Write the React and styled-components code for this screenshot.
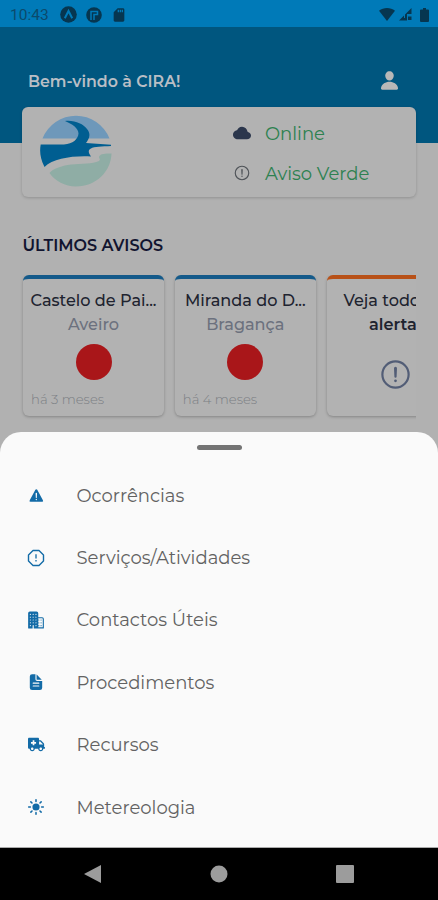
import React from 'react'
import styled, { createGlobalStyle } from 'styled-components'
import {
  IoPerson,
  IoCloud,
  IoAlertCircleOutline,
  IoWarning,
  IoBusiness,
  IoDocumentText,
  IoSunny,
} from 'react-icons/io5'
import { FaAmbulance } from 'react-icons/fa'
import { MdSdCard } from 'react-icons/md'

const GlobalStyle = createGlobalStyle`
  * {
    box-sizing: border-box;
  }

  body {
    margin: 0;
    background-color: #b1b1b1;
    font-family: Montserrat, Inter, sans-serif;
  }
`

const Screen = styled.div`
  display: flex;
  flex-direction: column;
  width: 438px;
  height: 900px;
  overflow: hidden;
  background-color: #b1b1b1;
`

const StatusBar = styled.div`
  display: flex;
  flex: none;
  align-items: center;
  justify-content: space-between;
  height: 27px;
  padding: 2px 9px 0 10px;
  background-color: #007ab8;
  color: #063650;
`

const StatusGroup = styled.div`
  display: flex;
  align-items: center;
  gap: ${props => props.gap}px;

  svg {
    display: block;
  }
`

const Clock = styled.span`
  width: 41px;
  font-family: Roboto, sans-serif;
  font-size: 15.5px;
  color: #0b4a6c;
`

const Header = styled.header`
  display: flex;
  flex: none;
  justify-content: space-between;
  height: 116px;
  padding: 41px 38px 0 28px;
  background-color: #00567f;
  color: #b9bec5;

  svg {
    width: 21px;
    height: 25px;
    color: #b8b8b8;
  }
`

const Welcome = styled.h1`
  margin: 0;
  font-size: 15.8px;
  font-weight: 600;
  line-height: 28px;
`

const Summary = styled.section`
  display: flex;
  flex: none;
  width: 394px;
  height: 90px;
  margin: -36px 0 0 22px;
  padding: 8px 0 0 18px;
  background-color: #b2b2b2;
  border-radius: 6px;
  box-shadow: 0 1px 3px rgba(0, 0, 0, 0.18);
`

const SummaryLines = styled.div`
  display: flex;
  flex-direction: column;
  gap: 12px;
  margin: 4px 0 0 121px;
`

const SummaryLine = styled.div`
  display: flex;
  align-items: center;
  gap: 14px;
  height: 28px;
  padding-top: 1px;
  color: #2d8150;
  font-size: 18px;

  svg {
    width: 18px;
    height: 18px;
    margin-top: -2px;
    color: ${props => props.iconColor};
  }
`

const SectionTitle = styled.h2`
  flex: none;
  margin: 37px 0 0 22.5px;
  color: #11142f;
  font-size: 16px;
  font-weight: 600;
  line-height: 23px;
`

const Alerts = styled.div`
  display: flex;
  flex: none;
  gap: 10.8px;
  width: 397px;
  height: 152px;
  margin: 18px 0 0 19px;
  padding: 0 4px 11px;
  overflow: hidden;
`

const AlertCard = styled.article`
  display: flex;
  flex: none;
  flex-direction: column;
  align-items: center;
  width: 141px;
  height: 141px;
  padding-top: 9px;
  background-color: #b2b2b2;
  border-top: 4px solid ${props => props.accent};
  border-radius: 6px;
  box-shadow: 0 1px 3px rgba(0, 0, 0, 0.25);

  > svg {
    width: 35px;
    height: 35px;
    margin: 21px 3px 0 0;
    color: #525d76;
  }
`

const Place = styled.div`
  color: #20232f;
  font-size: 16.1px;
  font-weight: ${props => props.weight || 500};
  line-height: 24px;
  white-space: nowrap;
`

const District = styled(Place)`
  color: #6c717e;
`

const Severity = styled.div`
  width: 36px;
  height: 36px;
  margin-top: 8px;
  background-color: #a91619;
  border-radius: 50%;
`

const Age = styled.div`
  align-self: flex-start;
  margin: 9px 0 0 8px;
  color: #7c7f84;
  font-size: 13.2px;
  font-weight: 300;
  line-height: 20px;
`

const Sheet = styled.nav`
  display: flex;
  flex: none;
  flex-direction: column;
  align-items: center;
  height: 416px;
  margin-top: 5px;
  background-color: #fafafa;
  border-bottom: 1px solid #aaa;
  border-radius: 21px 21px 0 0;
`

const Handle = styled.div`
  flex: none;
  width: 45px;
  height: 5px;
  margin: 13px 0 14px;
  background-color: #747474;
  border-radius: 3px;
`

const MenuItem = styled.a`
  display: flex;
  flex: none;
  align-items: center;
  width: 100%;
  height: 62.4px;
  padding: 1px 0 0 27px;
  color: #626262;
  font-size: 18px;
`

const MenuIcon = styled.span`
  display: flex;
  justify-content: center;
  width: 18px;
  margin: -1px 31.5px 0 0;
  color: #136ba7;

  svg {
    flex: none;
    width: ${props => props.size}px;
    height: ${props => props.size}px;
  }
`

const NavBar = styled.div`
  display: flex;
  flex: 1;
  align-items: center;
  justify-content: space-between;
  padding: 0 84px;
  background-color: #000;

  svg {
    fill: #9c9c9c;
  }
`

// round river emblem shown on the left of the summary card
const Logo = () => (
  <svg width="72" height="72" viewBox="0 0 72 72">
    <path d="M2.5 23.5a36 36 0 0 1 67 0z" fill="#6e98ba" />
    <path
      d="M25 6c10-1 18 3 22 8 5 6 1 11-1 14l25 1.700V31c-9 .5-17 .5-20 2.500-3 1.500-3 3.500 0 8-18-1-38 2-46.500 10.500C0 43-.5 36 .7 29.500H24c9-1 14-5 14.500-11C38.500 13 32 9 25 6z"
      fill="#005e91"
    />
    <path
      d="M71.500 38.500c-7-.3-12 .5-12.500 3.500 0 2 2 2 0 4-7 3-17 2.500-28 3.500-10 1.500-18 4-21.500 8.500C15 66 25 71.500 36 71.500c20 0 35-15 35.500-33z"
      fill="#8fada5"
    />
  </svg>
)

const ExpoIcon = () => (
  <svg width="17" height="17" viewBox="0 0 17 17">
    <circle cx="8.500" cy="8.500" r="8.300" fill="currentColor" />
    <path d="M4.800 12.300 8.500 5l3.700 7.300" fill="none" stroke="#007ab8" strokeWidth="2" />
  </svg>
)

const AppIcon = () => (
  <svg width="16" height="16" viewBox="0 0 16 16">
    <circle cx="8" cy="8" r="7.800" fill="currentColor" />
    <path d="M5 13V4.500h6.500v3H8V13M11.500 7.500H9" fill="none" stroke="#007ab8" strokeWidth="1.500" />
  </svg>
)

const WifiIcon = () => (
  <svg width="16" height="13" viewBox="0 0 16 13">
    <path d="M0 2.800C4.500-.8 11.500-.8 16 2.800L8 13z" fill="currentColor" />
  </svg>
)

const SignalIcon = () => (
  <svg width="13" height="13" viewBox="0 0 13 13">
    <path d="M12.500 0v6H8v6.500H0z" fill="currentColor" />
    <path d="M9 8.500h3.500V12H9z" fill="currentColor" />
    <path d="M5.500 6v4" stroke="#007ab8" />
  </svg>
)

const BatteryIcon = () => (
  <svg width="13" height="14" viewBox="-4 0 13 14">
    <path d="M3 0h3v1.500h2q1 0 1 1V13q0 1-1 1H1q-1 0-1-1V2.500q0-1 1-1h2z" fill="currentColor" />
  </svg>
)

const OctagonAlert = () => (
  <svg viewBox="0 0 18 18">
    <path
      d="M6 1.500h6L16.500 6v6L12 16.500H6L1.500 12V6z"
      fill="none"
      stroke="currentColor"
      strokeWidth="1.400"
      strokeLinejoin="round"
    />
    <path d="M9 5.300v4.200M9 11v1.600" stroke="currentColor" strokeWidth="1.300" />
  </svg>
)

const alerts = [
  { place: 'Castelo de Pai...', district: 'Aveiro', age: 'há 3 meses' },
  { place: 'Miranda do D...', district: 'Bragança', age: 'há 4 meses' },
]

const menu = [
  { label: 'Ocorrências', icon: <IoWarning />, iconSize: 17 },
  { label: 'Serviços/Atividades', icon: <OctagonAlert />, iconSize: 18 },
  { label: 'Contactos Úteis', icon: <IoBusiness />, iconSize: 18 },
  { label: 'Procedimentos', icon: <IoDocumentText />, iconSize: 18 },
  { label: 'Recursos', icon: <FaAmbulance />, iconSize: 17 },
  { label: 'Metereologia', icon: <IoSunny />, iconSize: 18 },
]

export default function App() {
  return (
    <Screen>
      <GlobalStyle />
      <StatusBar>
        <StatusGroup gap={9}>
          <Clock>10:43</Clock>
          <ExpoIcon />
          <AppIcon />
          <MdSdCard size={16} />
        </StatusGroup>
        <StatusGroup gap={4}>
          <WifiIcon />
          <SignalIcon />
          <BatteryIcon />
        </StatusGroup>
      </StatusBar>

      <Header>
        <Welcome>Bem-vindo à CIRA!</Welcome>
        <IoPerson />
      </Header>

      <Summary>
        <Logo />
        <SummaryLines>
          <SummaryLine iconColor="#2b364c">
            <IoCloud />
            Online
          </SummaryLine>
          <SummaryLine iconColor="#4f5358">
            <IoAlertCircleOutline />
            Aviso Verde
          </SummaryLine>
        </SummaryLines>
      </Summary>

      <SectionTitle>ÚLTIMOS AVISOS</SectionTitle>
      <Alerts>
        {alerts.map(alert => (
          <AlertCard key={alert.place} accent="#145a8a">
            <Place>{alert.place}</Place>
            <District>{alert.district}</District>
            <Severity />
            <Age>{alert.age}</Age>
          </AlertCard>
        ))}
        <AlertCard accent="#b85118">
          <Place>Veja todos os</Place>
          <Place weight={600}>alertas</Place>
          <IoAlertCircleOutline />
        </AlertCard>
      </Alerts>

      <Sheet>
        <Handle />
        {menu.map(item => (
          <MenuItem key={item.label}>
            <MenuIcon size={item.iconSize}>{item.icon}</MenuIcon>
            {item.label}
          </MenuItem>
        ))}
      </Sheet>

      <NavBar>
        <svg width="18" height="18" viewBox="0 0 18 18">
          <path d="M0 9 17 0v18z" />
        </svg>
        <svg width="18" height="18" viewBox="0 0 18 18">
          <circle cx="9" cy="9" r="8.500" />
        </svg>
        <svg width="18" height="18" viewBox="0 0 18 18">
          <rect width="18" height="18" rx="1" />
        </svg>
      </NavBar>
    </Screen>
  )
}
